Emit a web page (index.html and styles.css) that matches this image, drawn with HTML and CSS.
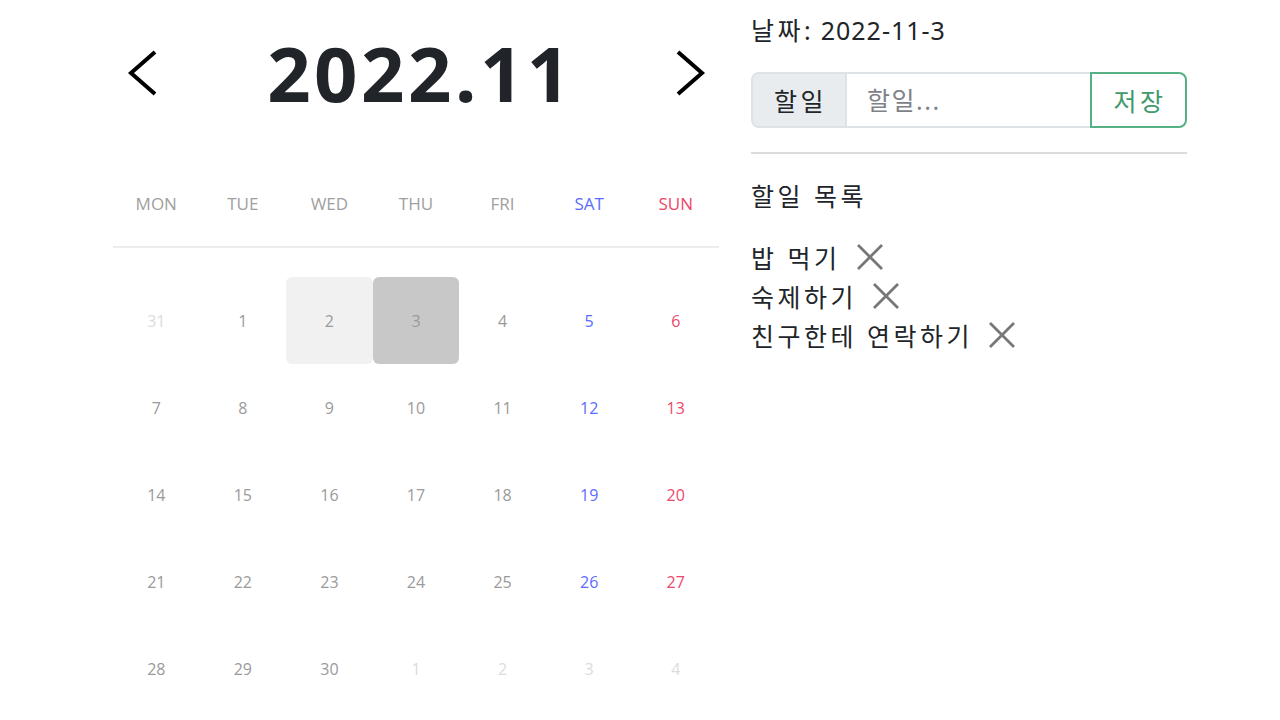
FILE: index.html
```html
<!DOCTYPE html>
<html lang="ko">
<head>
<meta charset="utf-8">
<title>Calendar</title>
<link rel="stylesheet" href="styles.css">
</head>
<body>
<div class="page">
  <section class="calendar">
    <div class="cal-header">
      <button class="nav-btn" aria-label="prev">
        <svg width="32" height="46" viewBox="0 0 32 46"><polyline points="29,2 5,23 29,44" fill="none" stroke="#000" stroke-width="4"/></svg>
      </button>
      <h1 class="title">2022.11</h1>
      <button class="nav-btn" aria-label="next">
        <svg width="32" height="46" viewBox="0 0 32 46"><polyline points="3,2 27,23 3,44" fill="none" stroke="#000" stroke-width="4"/></svg>
      </button>
    </div>
    <div class="weekdays">
      <div>MON</div><div>TUE</div><div>WED</div><div>THU</div><div>FRI</div><div class="sat">SAT</div><div class="sun">SUN</div>
    </div>
    <div class="days">
      <div class="day other">31</div><div class="day">1</div><div class="day today">2</div><div class="day selected">3</div><div class="day">4</div><div class="day sat">5</div><div class="day sun">6</div>
      <div class="day">7</div><div class="day">8</div><div class="day">9</div><div class="day">10</div><div class="day">11</div><div class="day sat">12</div><div class="day sun">13</div>
      <div class="day">14</div><div class="day">15</div><div class="day">16</div><div class="day">17</div><div class="day">18</div><div class="day sat">19</div><div class="day sun">20</div>
      <div class="day">21</div><div class="day">22</div><div class="day">23</div><div class="day">24</div><div class="day">25</div><div class="day sat">26</div><div class="day sun">27</div>
      <div class="day">28</div><div class="day">29</div><div class="day">30</div><div class="day other">1</div><div class="day other">2</div><div class="day other">3</div><div class="day other">4</div>
    </div>
  </section>
  <section class="todo">
    <div class="date-label"><span class="ko">날짜:</span> <span class="num">2022-11-3</span></div>
    <div class="input-group">
      <span class="addon ko">할일</span>
      <input class="field" type="text" placeholder="할일...">
      <button class="save ko">저장</button>
    </div>
    <hr class="divider">
    <div class="list-title ko">할일 목록</div>
    <ul class="list">
      <li><span class="ko">밥 먹기</span><span class="x"><svg width="30" height="30" viewBox="0 0 30 30"><path d="M3 3L27 27M27 3L3 27" stroke="#777" stroke-width="2.8"/></svg></span></li>
      <li><span class="ko">숙제하기</span><span class="x"><svg width="30" height="30" viewBox="0 0 30 30"><path d="M3 3L27 27M27 3L3 27" stroke="#777" stroke-width="2.8"/></svg></span></li>
      <li><span class="ko">친구한테 연락하기</span><span class="x"><svg width="30" height="30" viewBox="0 0 30 30"><path d="M3 3L27 27M27 3L3 27" stroke="#777" stroke-width="2.8"/></svg></span></li>
    </ul>
  </section>
</div>
</body>
</html>
```
FILE: styles.css
```css
* { box-sizing: border-box; }
html, body { margin: 0; padding: 0; background: #fff; }
body {
  font-family: "Noto Sans", "Noto Sans CJK KR", sans-serif;
  color: #212529;
}
.page {
  display: flex;
  gap: 32px;
  padding-left: 113px;
  align-items: flex-start;
}
.calendar { width: 606px; }
.cal-header {
  height: 160px;
  padding: 0 12px 14px 13px;
  display: flex;
  align-items: center;
  justify-content: space-between;
}
.nav-btn {
  background: none;
  border: 0;
  padding: 0;
  width: 32px;
  height: 46px;
  cursor: pointer;
}
.nav-btn svg { display: block; }
.title {
  margin: 0;
  font-size: 76px;
  font-weight: 700;
  line-height: 1;
  color: #212529;
  letter-spacing: 3.5px;
  padding-left: 8px;
}
.weekdays {
  display: grid;
  grid-template-columns: repeat(7, 1fr);
  height: 88px;
  align-items: center;
  border-bottom: 2px solid #ececec;
  font-family: "Open Sans", "Noto Sans", sans-serif;
  font-size: 17px;
  color: #a0a0a0;
  text-align: center;
}
.weekdays > div { line-height: 1; }
.sat { color: #5c6cff !important; }
.sun { color: #f0466a !important; }
.days {
  margin-top: 29px;
  display: grid;
  grid-template-columns: repeat(7, 1fr);
  grid-auto-rows: 87px;
}
.day {
  display: flex;
  align-items: center;
  justify-content: center;
  font-family: "Open Sans", "Noto Sans", sans-serif;
  font-size: 16px;
  color: #9a9a9a;
  border-radius: 6px;
}
.day.other { color: #dcdcdc; }
.day.today { background: #f1f1f1; }
.day.selected { background: #c8c8c8; }
.todo { width: 436px; padding-top: 11px; }
.ko { letter-spacing: 3.5px; }
.num { letter-spacing: 1px; }
.date-label {
  font-size: 25px;
  line-height: 38px;
  color: #212529;
}
.input-group {
  margin-top: 23px;
  display: flex;
  height: 56px;
}
.addon {
  width: 96px;
  display: flex;
  align-items: center;
  justify-content: center;
  padding-left: 3px;
  background: #e9ecef;
  border: 2px solid #dee2e6;
  border-radius: 8px 0 0 8px;
  font-size: 25px;
  color: #212529;
}
.field {
  flex: 1;
  min-width: 0;
  border: 2px solid #dee2e6;
  border-left: 0;
  border-right: 0;
  padding: 0 20px;
  font-family: inherit;
  font-size: 25px;
  letter-spacing: 1.5px;
  color: #212529;
  outline: none;
}
.field::placeholder { color: #7d8288; }
.save {
  width: 97px;
  padding: 0 0 0 3px;
  background: #fff;
  border: 2px solid #55b084;
  border-radius: 0 8px 8px 0;
  font-family: inherit;
  font-size: 25px;
  color: #3f9a6c;
  cursor: pointer;
}
.divider {
  margin: 24px 0 0;
  border: 0;
  border-top: 2px solid #dcdcdc;
}
.list-title {
  margin-top: 23px;
  font-size: 25px;
  line-height: 38px;
  color: #212529;
}
.list {
  list-style: none;
  margin: 24px 0 0;
  padding: 0;
}
.list li {
  font-size: 25px;
  line-height: 39px;
  color: #212529;
  display: flex;
  align-items: center;
}
.x {
  display: inline-flex;
  margin-left: 14px;
  margin-top: -3px;
}
.x svg { display: block; }
```
